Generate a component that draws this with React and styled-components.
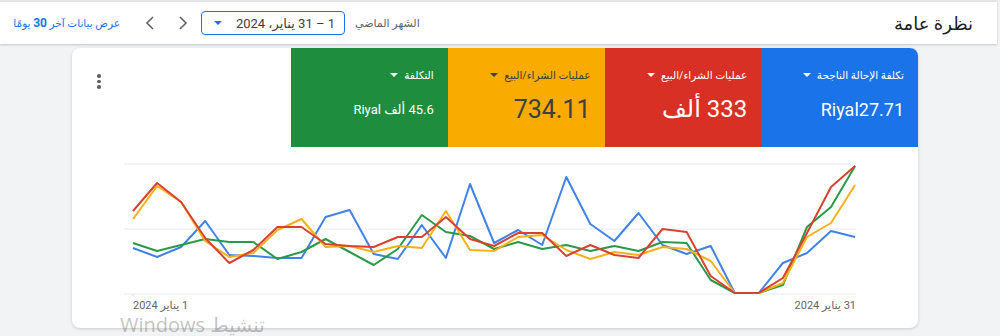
import React from 'react';
import styled, { createGlobalStyle } from 'styled-components';

const GlobalStyle = createGlobalStyle`
  html, body {
    margin: 0;
    padding: 0;
    background: #f1f3f4;
    font-family: Roboto, "DejaVu Sans", sans-serif;
  }
  #root {
    position: relative;
    min-height: 336px;
    overflow: hidden;
  }
`;

const Header = styled.header`
  direction: rtl;
  display: flex;
  align-items: center;
  height: 42px;
  margin-right: 3px;
  padding: 0 24px 0 15px;
  background: #fff;
  border-top: 2px solid #e3e5e8;
  box-shadow: 0 1px 2px rgba(60, 64, 67, 0.25);
`;

const Title = styled.h1`
  margin: 0;
  font-size: 18px;
  font-weight: 400;
  color: #202124;
`;

const Controls = styled.div`
  display: flex;
  align-items: center;
  margin-inline-start: auto;
`;

const RangeLabel = styled.span`
  font-size: 11px;
  color: #5f6368;
  margin-left: 10px;
`;

const DateBox = styled.div`
  box-sizing: border-box;
  display: flex;
  align-items: center;
  justify-content: space-between;
  width: 144px;
  height: 24px;
  padding: 0 9px 0 12px;
  border: 1.5px solid #1a73e8;
  border-radius: 4px;
  font-size: 13px;
  color: #3c4043;
  white-space: nowrap;
`;

const Caret = styled.span`
  width: 0;
  height: 0;
  border-left: ${(p) => p.$size}px solid transparent;
  border-right: ${(p) => p.$size}px solid transparent;
  border-top: ${(p) => p.$size}px solid ${(p) => p.$color};
  flex: none;
`;

const NavButton = styled.button`
  display: flex;
  align-items: center;
  justify-content: center;
  width: 24px;
  height: 24px;
  padding: 0;
  margin-right: ${(p) => p.$gap}px;
  border: none;
  background: none;
  color: #5f6368;
`;

const DaysLink = styled.a`
  width: 105px;
  margin-right: 18px;
  font-size: 10.5px;
  color: #1a73e8;
  white-space: nowrap;
  text-align: left;
  b {
    font-weight: 700;
    font-size: 12px;
  }
`;

const Card = styled.section`
  display: flex;
  flex-direction: column;
  margin: 4px 82px 0 72px;
  height: 280px;
  box-sizing: border-box;
  padding-bottom: 14px;
  background: #fff;
  border-radius: 8px;
  overflow: hidden;
  box-shadow: 0 1px 3px rgba(60, 64, 67, 0.22);
`;

const TopRow = styled.div`
  display: flex;
  justify-content: space-between;
  height: 99px;
`;

const Kebab = styled.div`
  display: flex;
  flex-direction: column;
  gap: 2px;
  margin: 26px 0 0 25px;
  span {
    width: 3.5px;
    height: 3.5px;
    border-radius: 50%;
    background: #5f6368;
  }
`;

const Tiles = styled.div`
  direction: rtl;
  display: flex;
  width: 627px;
`;

const Tile = styled.div`
  flex: 1;
  box-sizing: border-box;
  padding: 19px 14px 0 10px;
  background: ${(p) => p.$bg};
  color: ${(p) => p.$fg};
`;

const TileLabel = styled.div`
  display: flex;
  align-items: center;
  gap: 6px;
  height: 16px;
  font-size: 10.5px;
  white-space: nowrap;
`;

const TileValue = styled.div`
  display: flex;
  align-items: center;
  height: 32px;
  margin-top: 10px;
  font-size: ${(p) => p.$size}px;
  white-space: nowrap;
`;

const ChartWrap = styled.div`
  margin: 13px 0 0 52px;
  width: 732px;
`;

const ChartSvg = styled.svg`
  display: block;
`;

const AxisLabels = styled.div`
  direction: ltr;
  display: flex;
  justify-content: space-between;
  height: 16px;
  margin-top: 2px;
  padding-left: 9px;
  font-size: 11px;
  line-height: 16px;
  color: #5f6368;
  span {
    direction: rtl;
  }
`;

const Watermark = styled.div`
  position: absolute;
  left: 120px;
  top: 314px;
  direction: rtl;
  font-family: "Open Sans", "DejaVu Sans", sans-serif;
  font-size: 20px;
  line-height: 22px;
  color: rgba(120, 120, 120, 0.45);
  pointer-events: none;
`;

const series = [
  {
    color: '#3f83e8',
    y: [248, 257, 247, 221, 255, 256, 258, 258, 217, 210, 254, 259, 225, 258, 184, 243, 230, 245,
      177, 224, 241, 213, 245, 254, 246, 293, 293, 263, 253, 231, 237],
  },
  {
    color: '#2a9a48',
    y: [243, 251, 245, 239, 242, 242, 259, 252, 239, 252, 265, 249, 215, 232, 236, 249, 242, 249,
      245, 251, 246, 251, 242, 243, 280, 293, 293, 285, 227, 207, 166],
  },
  {
    color: '#f6b11a',
    y: [219, 186, 202, 241, 257, 253, 230, 219, 247, 246, 252, 246, 248, 211, 250, 251, 237, 235,
      250, 259, 252, 255, 247, 249, 261, 293, 293, 283, 237, 223, 185],
  },
  {
    color: '#d8422e',
    y: [211, 183, 202, 238, 263, 250, 227, 227, 244, 246, 247, 237, 237, 217, 239, 246, 233, 233,
      256, 245, 255, 258, 229, 232, 276, 293, 293, 278, 233, 187, 166],
  },
];

const tiles = [
  { label: 'تكلفة الإحالة الناجحة', value: 'Riyal27.71', size: 18, bg: '#1a73e8', fg: '#fff' },
  { label: 'عمليات الشراء/البيع', value: '333 ألف', size: 24, bg: '#d93025', fg: '#fff' },
  { label: 'عمليات الشراء/البيع', value: '734.11', size: 25, bg: '#f9ab00', fg: '#3c4043' },
  { label: 'التكلفة', value: '45.6 ألف Riyal', size: 13, bg: '#1e8e3e', fg: '#fff' },
];

const Chevron = ({ dir }) => (
  <svg width="12" height="16" viewBox="0 0 12 16">
    <path
      d={dir === 'left' ? 'M9 2 L3 8 L9 14' : 'M3 2 L9 8 L3 14'}
      fill="none"
      stroke="currentColor"
      strokeWidth="1.6"
    />
  </svg>
);

const Chart = () => (
  <ChartSvg width="732" height="136" viewBox="124 160 732 136">
    {[164, 229, 294].map((y) => (
      <line key={y} x1="124" x2="856" y1={y} y2={y} stroke="#e8eaed" strokeWidth="1" />
    ))}
    <line x1="133" x2="133" y1="294" y2="297" stroke="#dadce0" strokeWidth="1" />
    {series.map((s) => (
      <polyline
        key={s.color}
        points={s.y.map((y, i) => `${(133 + i * 24.07).toFixed(1)},${y}`).join(' ')}
        fill="none"
        stroke={s.color}
        strokeWidth="2"
        strokeLinejoin="round"
      />
    ))}
  </ChartSvg>
);

export default function App() {
  return (
    <>
      <GlobalStyle />
      <Header>
        <Title>نظرة عامة</Title>
        <Controls>
          <RangeLabel>الشهر الماضي</RangeLabel>
          <DateBox>
            <span>1 – 31 يناير، 2024</span>
            <Caret $size={4} $color="#1a73e8" />
          </DateBox>
          <NavButton $gap={6}>
            <Chevron dir="right" />
          </NavButton>
          <NavButton $gap={9}>
            <Chevron dir="left" />
          </NavButton>
          <DaysLink>
            عرض بيانات آخر <b>30</b> يومًا
          </DaysLink>
        </Controls>
      </Header>
      <Card>
        <TopRow>
          <Kebab>
            <span />
            <span />
            <span />
          </Kebab>
          <Tiles>
            {tiles.map((t) => (
              <Tile key={t.bg} $bg={t.bg} $fg={t.fg}>
                <TileLabel>
                  <span>{t.label}</span>
                  <Caret $size={4} $color={t.fg} />
                </TileLabel>
                <TileValue $size={t.size}>{t.value}</TileValue>
              </Tile>
            ))}
          </Tiles>
        </TopRow>
        <ChartWrap>
          <Chart />
          <AxisLabels>
            <span>1 يناير 2024</span>
            <span>31 يناير 2024</span>
          </AxisLabels>
        </ChartWrap>
      </Card>
      <Watermark>تنشيط Windows</Watermark>
    </>
  );
}
